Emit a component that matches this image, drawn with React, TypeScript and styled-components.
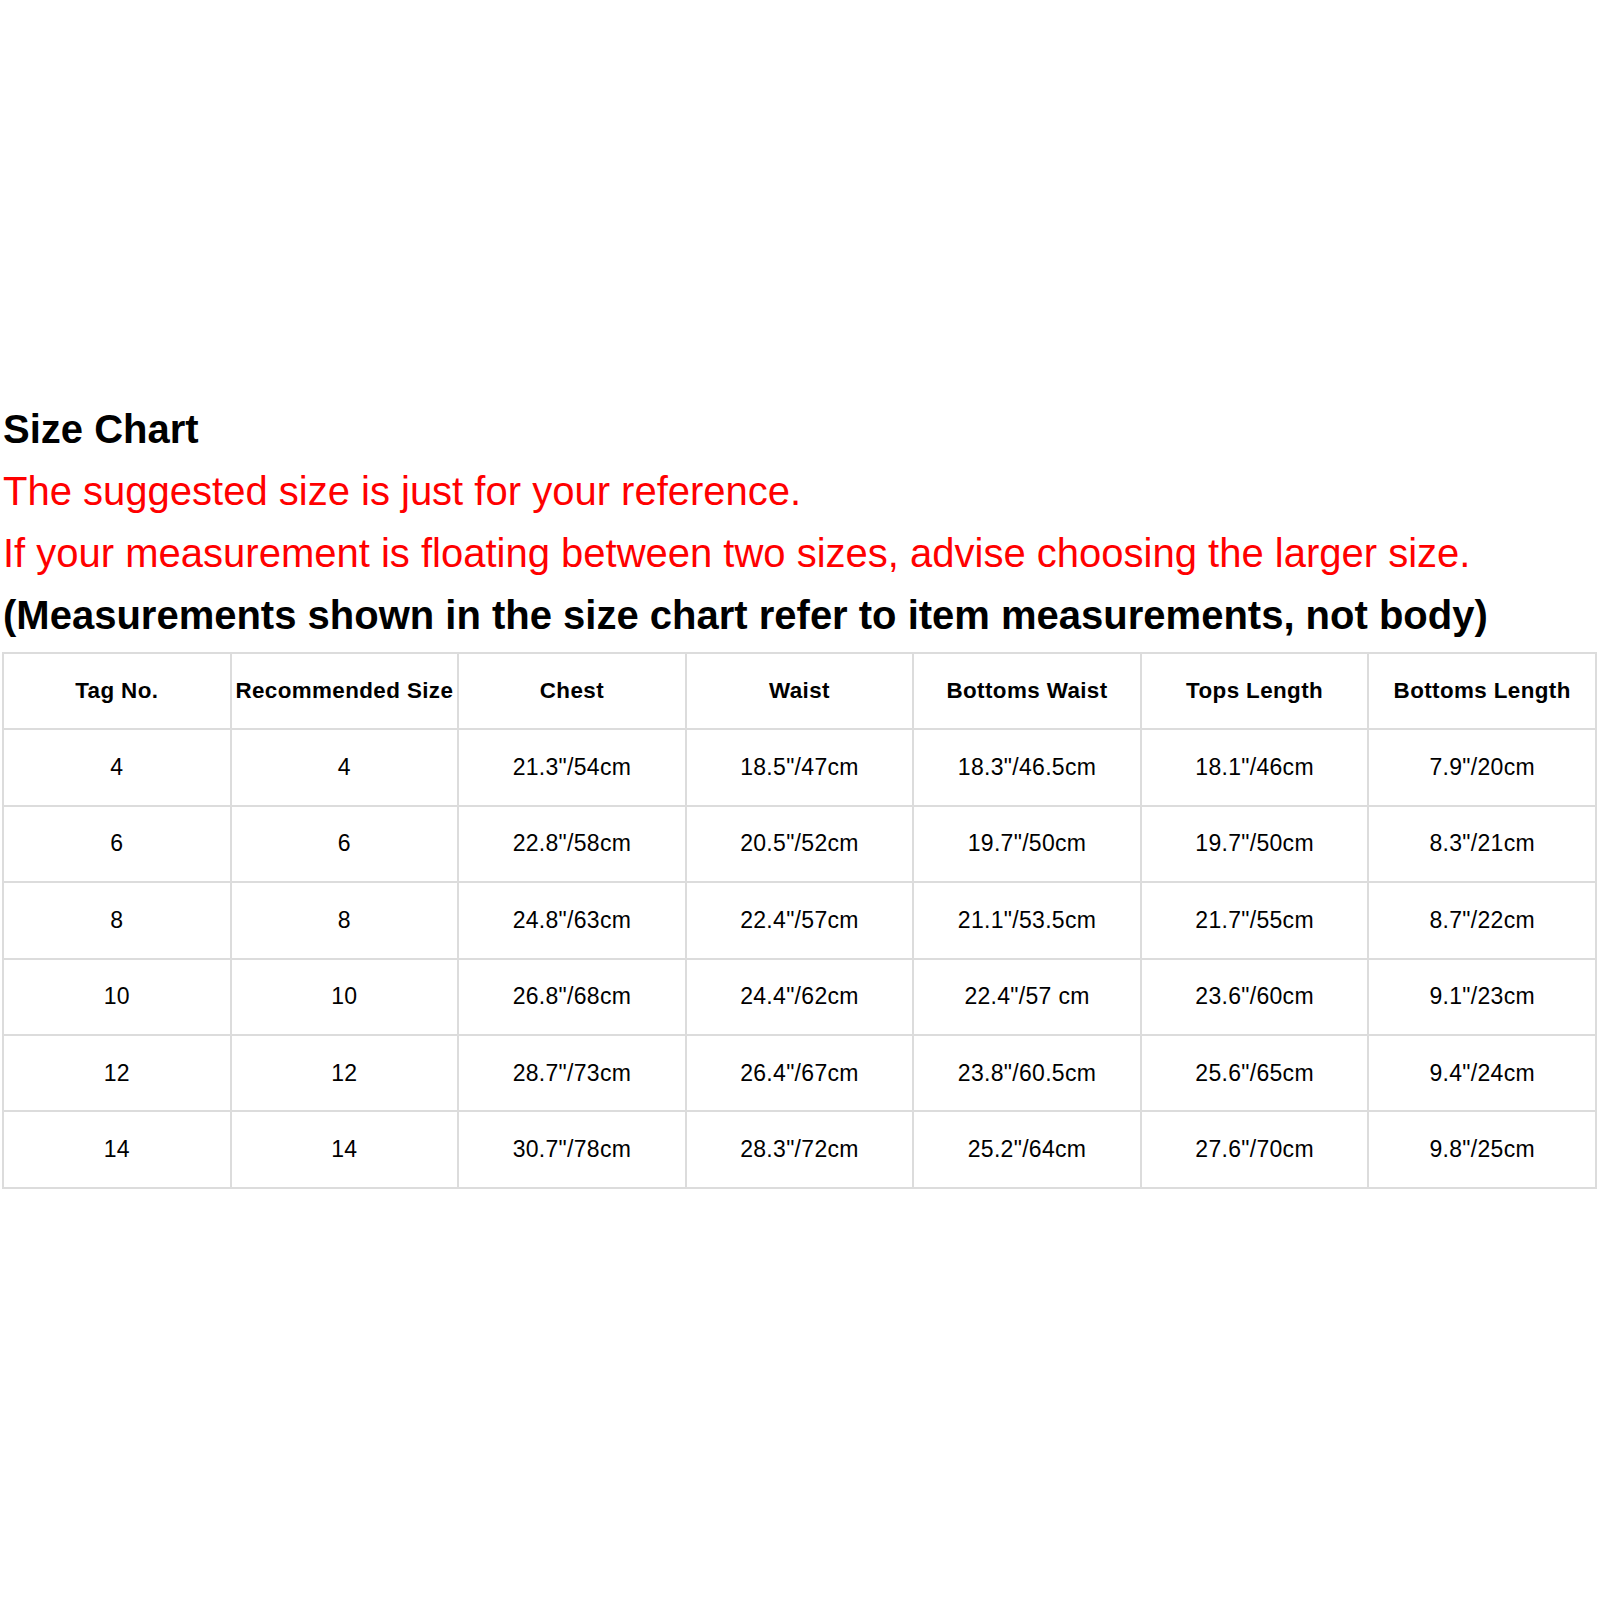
import React from "react";
import styled, { createGlobalStyle } from "styled-components";

const Global = createGlobalStyle`
  html, body { margin: 0; padding: 0; background: #fff; }
  body { font-family: "Liberation Sans", Arial, sans-serif; color: #000; }
`;

const Page = styled.div`
  width: 1600px;
  height: 1600px;
  padding-top: 398px;
  padding-left: 2px;
  box-sizing: border-box;
`;

const Heading = styled.div`
  font-size: 40px;
  line-height: 62px;
  font-weight: 700;
  padding-left: 1px;
  color: #000;
`;

const Note = styled.div`
  font-size: 40px;
  line-height: 62px;
  color: #ff0000;
  padding-left: 1px;
`;

const Table = styled.table`
  margin-top: 6px;
  width: 1595px;
  border-collapse: collapse;
  table-layout: fixed;
  border: 2px solid #dcdcdc;
`;

const Cell = styled.td<{ $head?: boolean }>`
  border: 2px solid #dcdcdc;
  height: 74.4px;
  padding: 0;
  text-align: center;
  vertical-align: middle;
  font-size: ${(p) => (p.$head ? "22.4px" : "23px")};
  font-weight: ${(p) => (p.$head ? 700 : 400)};
  letter-spacing: ${(p) => (p.$head ? "0.4px" : "0.3px")};
  color: #000;
  white-space: nowrap;
`;

const headers = [
  "Tag No.",
  "Recommended Size",
  "Chest",
  "Waist",
  "Bottoms Waist",
  "Tops Length",
  "Bottoms Length",
];

const rows = [
  ["4", "4", '21.3"/54cm', '18.5"/47cm', '18.3"/46.5cm', '18.1"/46cm', '7.9"/20cm'],
  ["6", "6", '22.8"/58cm', '20.5"/52cm', '19.7"/50cm', '19.7"/50cm', '8.3"/21cm'],
  ["8", "8", '24.8"/63cm', '22.4"/57cm', '21.1"/53.5cm', '21.7"/55cm', '8.7"/22cm'],
  ["10", "10", '26.8"/68cm', '24.4"/62cm', '22.4"/57 cm', '23.6"/60cm', '9.1"/23cm'],
  ["12", "12", '28.7"/73cm', '26.4"/67cm', '23.8"/60.5cm', '25.6"/65cm', '9.4"/24cm'],
  ["14", "14", '30.7"/78cm', '28.3"/72cm', '25.2"/64cm', '27.6"/70cm', '9.8"/25cm'],
];

export default function App() {
  return (
    <>
      <Global />
      <Page>
        <Heading>Size Chart</Heading>
        <Note>The suggested size is just for your reference.</Note>
        <Note>If your measurement is floating between two sizes, advise choosing the larger size.</Note>
        <Heading>(Measurements shown in the size chart refer to item measurements, not body)</Heading>
        <Table>
          <tbody>
            <tr>
              {headers.map((h) => (
                <Cell as="th" $head key={h}>
                  {h}
                </Cell>
              ))}
            </tr>
            {rows.map((r, i) => (
              <tr key={i}>
                {r.map((c, j) => (
                  <Cell key={j}>{c}</Cell>
                ))}
              </tr>
            ))}
          </tbody>
        </Table>
      </Page>
    </>
  );
}
